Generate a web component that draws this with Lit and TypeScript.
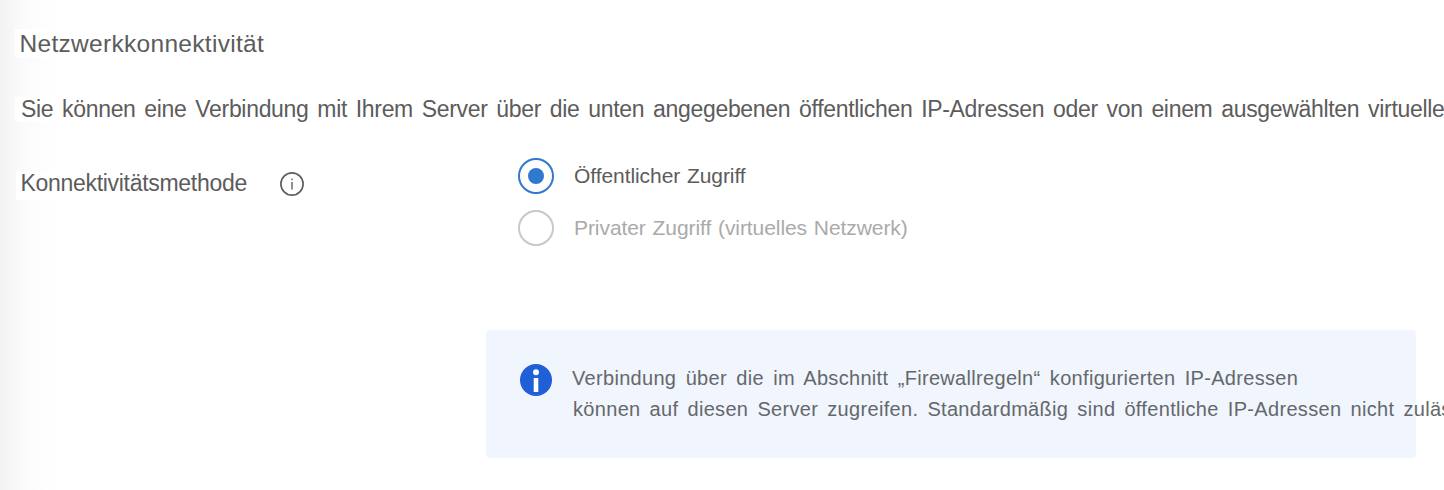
import { LitElement, html, css } from "lit";
import { customElement } from "lit/decorators.js";

@customElement("app-root")
class AppRoot extends LitElement {
  static styles = css`
    :host { display: block; height: 490px; overflow: hidden; box-sizing: border-box; background: linear-gradient(90deg, #f3f3f3 0, #fafafa 20px, #fdfdfd 38px, #fff 64px); color: #5c5c5c; font-family: "Liberation Sans", Arial, sans-serif; white-space: nowrap; }
    .title { margin: 0; padding: 29px 0 0 15px; font-weight: 400; font-size: 24.5px; line-height: 29px; letter-spacing: 0.3px; }
    .title span { display: inline-block; padding-left: 4.5px; background: #fff; }
    .intro { margin: 0; padding: 39px 0 0 15px; font-size: 23px; line-height: 25px; letter-spacing: -0.32px; word-spacing: 2.7px; }
    .intro span { display: inline-block; padding-left: 6px; background: #fff; }
    .field { display: flex; padding-top: 36px; }
    .label { width: 502px; padding: 13px 0 0 16px; font-size: 23px; line-height: 29px; display: flex; letter-spacing: -0.3px; }
    .label span { box-sizing: border-box; width: 264px; height: 29px; padding-left: 4.5px; line-height: 25px; background: #fff; }
    .label svg { margin-top: 1px; }
    .option { display: flex; align-items: center; height: 36px; gap: 20px; margin-bottom: 16px; font-size: 21px; letter-spacing: -0.07px; word-spacing: 1px; }
    .disabled { color: #aaa; }
    .notice { display: flex; gap: 20px; margin: 68px 0 0 486px; width: 930px; height: 128px; box-sizing: border-box; padding: 34px; background: #f0f5fe; border-radius: 4px; font-size: 20px; line-height: 31px; color: #65686a; }
    .notice svg { flex: none; }
    .lines { margin-top: -1px; letter-spacing: 0.31px; word-spacing: 3.5px; }
    .second { padding-left: 1px; letter-spacing: 0.32px; word-spacing: 3.2px; }
  `;
  render() {
    return html`
      <h1 class="title"><span>Netzwerkkonnektivität</span></h1>
      <p class="intro"><span>Sie können eine Verbindung mit Ihrem Server über die unten angegebenen öffentlichen IP-Adressen oder von einem ausgewählten virtuelle</span></p>
      <div class="field">
        <div class="label"><span>Konnektivitätsmethode</span>
          <svg width="24" height="24" viewBox="0 0 24 24"><circle cx="12" cy="12" r="11.1" fill="none" stroke="#606060" stroke-width="1.7"/><path d="M12 10v7.5M12 6.5v1.7" stroke="#777" stroke-width="1.6"/></svg></div>
        <div>
          <div class="option"><svg width="36" height="36"><circle cx="18" cy="18" r="17" fill="#fff" stroke="#2f79cf" stroke-width="2"/><circle cx="18" cy="18" r="8" fill="#2f79cf"/></svg><span>Öffentlicher Zugriff</span></div>
          <div class="option disabled"><svg width="36" height="36"><circle cx="18" cy="18" r="17" fill="#fff" stroke="#c8c8c8" stroke-width="2"/></svg><span>Privater Zugriff (virtuelles Netzwerk)</span></div>
        </div>
      </div>
      <div class="notice"><svg width="32" height="32"><circle cx="16" cy="16" r="16" fill="#215fd6"/><circle cx="16" cy="8.2" r="3" fill="#fff"/><path d="M16 14v14" stroke="#fff" stroke-width="4.6"/></svg>
        <div class="lines"><div>Verbindung über die im Abschnitt „Firewallregeln“ konfigurierten IP-Adressen</div><div class="second">können auf diesen Server zugreifen. Standardmäßig sind öffentliche IP-Adressen nicht zuläs</div></div></div>`;
  }
}
